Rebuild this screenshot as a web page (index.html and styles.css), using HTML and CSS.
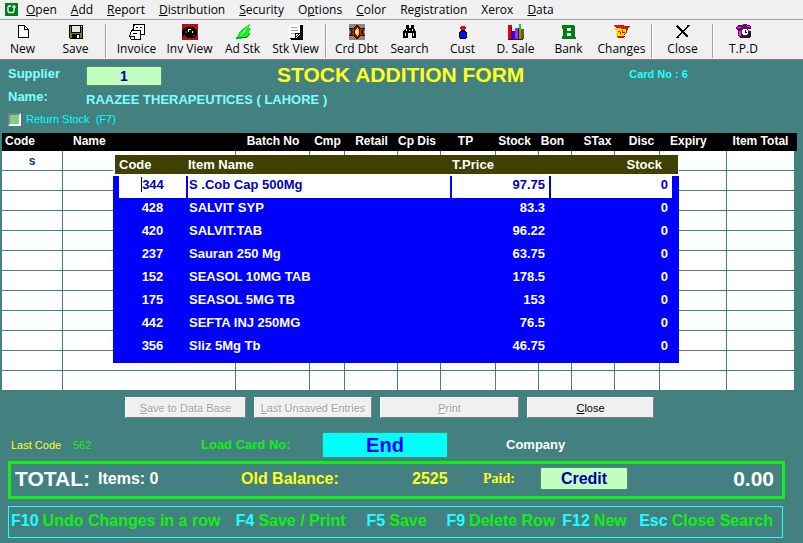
FILE: index.html
```html
<!DOCTYPE html>
<html lang="en">
  <head>
    <meta charset="UTF-8" />
    <title>Stock Addition Form</title>
    <link rel="stylesheet" href="styles.css">
  </head>
  <body>
    <nav class="menu">
      <svg class="app-icon" viewBox="0 0 13 13">
        <rect width="13" height="13" fill="#007d1c" />
        <path d="M6 3H4L3 4v4l1 1.500h4L9 8V6" fill="none" stroke="#fff" stroke-width="1.300" />
        <path d="M7 4h4M9 2v4" stroke="#fff" stroke-width="1.200" />
      </svg>
      <a href="#"><u>O</u>pen</a>
      <a href="#"><u>A</u>dd</a>
      <a href="#"><u>R</u>eport</a>
      <a href="#"><u>D</u>istribution</a>
      <a href="#"><u>S</u>ecurity</a>
      <a href="#">O<u>p</u>tions</a>
      <a href="#"><u>C</u>olor</a>
      <a href="#">Re<u>g</u>istration</a>
      <a href="#">Xerox</a>
      <a href="#"><u>D</u>ata</a>
    </nav>

    <div class="toolbar">
      <button type="button">
        <svg viewBox="0 0 16 16"><path d="M3.500 1.500h6l4 4v8h-10z" fill="#fff" stroke="#000" /><path d="M9.500 1.500v4h4" fill="none" stroke="#000" /></svg>
        New
      </button>
      <button type="button">
        <svg viewBox="0 0 16 16"><path d="M1 1h14v14H2l-1-1z" fill="#000" /><path d="M2 2h1v7h10V4h1v10h-2v-4H4v4H2z" fill="#808000" /><path d="M4 2h8v6H4z" fill="#e8e8e8" /><path d="M13 2h1v1h-1zM9 11h2v3H9z" fill="#fff" /></svg>
        Save
      </button>
      <span class="sep"></span>
      <button type="button">
        <svg viewBox="0 0 16 16"><path d="M4.500.5h11v10h-11z" fill="#fff" stroke="#000" /><path d="M2.500 6.500h9v9h-9l-2-3z" fill="#fff" stroke="#000" /><path d="M5.500.5l-2 6M7 3.500h2M11 3.500h2M4 9.500h4M1 12.500h4v3" fill="none" stroke="#000" /></svg>
        Invoice
      </button>
      <button type="button">
        <svg viewBox="0 0 16 16"><path d="M0 0h16v16H0z" fill="#b01010" /><path d="M0 6l4-3h7l4 3v6l-3 2H5l-2-3-3 2z" fill="#000" /><path d="M6 5h3v1H7v2H6zM10 7h1v2h-1z" fill="#fff" /><path d="M3 7h2v2H3zM11 11h2v1h-2z" fill="#b01010" /></svg>
        Inv View
      </button>
      <button type="button">
        <svg viewBox="0 0 16 16"><path d="M15 0L6 6l-5 8 1 1 9-1 4-4-1-2 2-3-2-1z" fill="#10f020" /><path d="M1 15l4-2 6 1 4-4" fill="none" stroke="#008018" /><path d="M5 12l8-9" stroke="#a0ffa0" /></svg>
        Ad Stk
      </button>
      <button type="button">
        <svg viewBox="0 0 16 16"><path d="M4 1h11v15H3l-1-2z" fill="#000" /><path d="M2 0h10v10l-4 4H1z" fill="#fff" /><path d="M3 3.500h6M3 6.500h7M3 9.500h4" stroke="#a0a0a0" /><path d="M7.500 13.500v-4h4z" fill="#fff" stroke="#000" /></svg>
        Stk View
      </button>
      <span class="sep"></span>
      <button type="button">
        <svg viewBox="0 0 16 16"><path d="M0 0h16v16H0z" fill="#888" /><path d="M8 0l3 4h5l-2 4 2 4h-5l-3 4-3-4H0l2-4-2-4h5z" fill="#400800" /><path d="M8 2l2 3h4l-2 3 2 3h-4l-2 3-2-3H2l2-3-2-3h4z" fill="#b03010" /><path d="M7 4h2v1h2v6H9v1H7v-1H5V5h2z" fill="#401000" /><path d="M8 4l2 2v4l-2 2-2-2V6z" fill="#ffc010" /><path d="M7 6h2v4H7z" fill="#fff040" /></svg>
        Crd Dbt
      </button>
      <button type="button">
        <svg viewBox="0 0 16 16"><path d="M4 1h3v3h2V1h3v3l2 4v6h-4V9H6v5H1V8l3-4z" fill="#000" /><path d="M4 5h1v2H4zM3 9h1v3H3zM10 5h1v2h-1zM11 9h1v3h-1zM7 6h1v1H7z" fill="#fff" /></svg>
        Search
      </button>
      <button type="button">
        <svg viewBox="0 0 16 16"><circle cx="8" cy="11" r="4" fill="#0010f0" stroke="#000" /><path d="M6 2h4v1h1v2h-1v2H6V5H5V3h1z" fill="#d01010" /><path d="M6 6.500h4" stroke="#000" /></svg>
        Cust
      </button>
      <button type="button">
        <svg viewBox="0 0 16 16"><path d="M0 1h4v14H0z" fill="#e00010" /><path d="M4 7h3v8H4z" fill="#1010e0" /><path d="M7 4h3v11H7z" fill="#e010e0" /><path d="M11 0h2v15h-2z" fill="#10d030" /><path d="M13 5h3v10h-3z" fill="#805010" /><path d="M3.500 3v12M10.500 4v11M0 15.500h15" stroke="#401040" /></svg>
        D. Sale
      </button>
      <button type="button">
        <svg viewBox="0 0 16 16"><path fill-rule="evenodd" d="M1 1h11l2 2v4l-1 1 1 1v4h1v2H1v-3h1V5H1zM6 4v3h4V4zM6 9v3h4V9z" fill="#008010" /></svg>
        Bank
      </button>
      <button type="button">
        <svg viewBox="0 0 16 16"><path d="M1 4h10l4-1-3 3 1 2-2 2-1 3H4l-2-2 1-3-2-2z" fill="#ffd800" /><path d="M0 1h8l3 1h5v1l-5 2-9-1zM3 12h8l-2 2H4z" fill="#e01010" /><path d="M11 5l3-1-2 3 1 1-3 3M4 7l2 1v2M8 6l1 3 2-1" fill="none" stroke="#a02000" /></svg>
        Changes
      </button>
      <span class="sep"></span>
      <button type="button">
        <svg viewBox="0 0 16 16"><path d="M2 2l11 11M14 1L2 14" stroke="#000" stroke-width="1.600" /></svg>
        Close
      </button>
      <span class="sep"></span>
      <button type="button">
        <svg viewBox="0 0 16 16"><path d="M2 1h4l2-1 5 1 2 2v2h-3v9H4L2 12V6L0 5V3z" fill="#700070" /><path d="M1 3h4v1H1zM11 2h3v1h-3zM3 7h2v5H3z" fill="#f030f0" /><path d="M12 7h3v6l-2 1H4l-1-1" fill="#301030" /><circle cx="9" cy="8" r="3.500" fill="#fff" stroke="#403040" /><path d="M9 6v2h2" fill="none" stroke="#000" /></svg>
        T.P.D
      </button>
    </div>

    <form>
      <header class="supplier">
        <label for="supplier">Supplier</label>
        <input type="text" id="supplier" class="field" value="1" />
        <h1>STOCK ADDITION FORM</h1>
        <span class="card-no">Card No : 6</span>
        <span>Name:</span>
        <span class="supplier-name">RAAZEE THERAPEUTICES ( LAHORE )</span>
        <label class="return" for="return_stock">
          <input type="checkbox" id="return_stock" />
          Return Stock&nbsp; (F7)
        </label>
      </header>

      <div class="sheet">
        <table class="grid">
          <colgroup>
            <col class="w-code" />
            <col />
            <col class="w-batch" />
            <col class="w-cmp" />
            <col class="w-retail" />
            <col class="w-cpdis" />
            <col class="w-tp" />
            <col class="w-stock" />
            <col class="w-bon" />
            <col class="w-stax" />
            <col class="w-disc" />
            <col class="w-expiry" />
            <col class="w-total" />
          </colgroup>
          <thead>
            <tr>
              <th class="left">Code</th>
              <th class="left indent">Name</th>
              <th>Batch No</th>
              <th>Cmp</th>
              <th>Retail</th>
              <th class="back">Cp Dis</th>
              <th class="back">TP</th>
              <th class="back">Stock</th>
              <th class="back">Bon</th>
              <th class="ahead">STax</th>
              <th class="ahead">Disc</th>
              <th class="left indent">Expiry</th>
              <th>Item Total</th>
            </tr>
          </thead>
          <tbody>
            <tr><td>s</td><td></td><td></td><td></td><td></td><td></td><td></td><td></td><td></td><td></td><td></td><td></td><td></td></tr>
            <tr><td></td><td></td><td></td><td></td><td></td><td></td><td></td><td></td><td></td><td></td><td></td><td></td><td></td></tr>
            <tr><td></td><td></td><td></td><td></td><td></td><td></td><td></td><td></td><td></td><td></td><td></td><td></td><td></td></tr>
            <tr><td></td><td></td><td></td><td></td><td></td><td></td><td></td><td></td><td></td><td></td><td></td><td></td><td></td></tr>
            <tr><td></td><td></td><td></td><td></td><td></td><td></td><td></td><td></td><td></td><td></td><td></td><td></td><td></td></tr>
            <tr><td></td><td></td><td></td><td></td><td></td><td></td><td></td><td></td><td></td><td></td><td></td><td></td><td></td></tr>
            <tr><td></td><td></td><td></td><td></td><td></td><td></td><td></td><td></td><td></td><td></td><td></td><td></td><td></td></tr>
            <tr><td></td><td></td><td></td><td></td><td></td><td></td><td></td><td></td><td></td><td></td><td></td><td></td><td></td></tr>
            <tr><td></td><td></td><td></td><td></td><td></td><td></td><td></td><td></td><td></td><td></td><td></td><td></td><td></td></tr>
            <tr><td></td><td></td><td></td><td></td><td></td><td></td><td></td><td></td><td></td><td></td><td></td><td></td><td></td></tr>
            <tr><td></td><td></td><td></td><td></td><td></td><td></td><td></td><td></td><td></td><td></td><td></td><td></td><td></td></tr>
            <tr><td></td><td></td><td></td><td></td><td></td><td></td><td></td><td></td><td></td><td></td><td></td><td></td><td></td></tr>
          </tbody>
        </table>

        <!-- item search list, opens over the grid -->
        <table class="lookup">
          <colgroup>
            <col class="l-code" />
            <col />
            <col class="l-price" />
            <col class="l-stock" />
          </colgroup>
          <thead>
            <tr><th>Code</th><th>Item Name</th><th>T.Price</th><th>Stock</th></tr>
          </thead>
          <tbody>
            <tr class="current"><td><span class="caret">344</span></td><td>S .Cob Cap 500Mg</td><td>97.75</td><td>0</td></tr>
            <tr><td>428</td><td>SALVIT SYP</td><td>83.3</td><td>0</td></tr>
            <tr><td>420</td><td>SALVIT.TAB</td><td>96.22</td><td>0</td></tr>
            <tr><td>237</td><td>Sauran 250 Mg</td><td>63.75</td><td>0</td></tr>
            <tr><td>152</td><td>SEASOL 10MG TAB</td><td>178.5</td><td>0</td></tr>
            <tr><td>175</td><td>SEASOL 5MG TB</td><td>153</td><td>0</td></tr>
            <tr><td>442</td><td>SEFTA INJ 250MG</td><td>76.5</td><td>0</td></tr>
            <tr><td>356</td><td>Sliz 5Mg Tb</td><td>46.75</td><td>0</td></tr>
          </tbody>
        </table>
      </div>

      <div class="actions">
        <button type="button" disabled><u>S</u>ave to Data Base</button>
        <button type="button" disabled><u>L</u>ast Unsaved Entries</button>
        <button type="button" disabled><u>P</u>rint</button>
        <button type="button"><u>C</u>lose</button>
      </div>

      <div class="status">
        <span class="small yellow">Last Code</span>
        <span class="small green">562</span>
        <label class="green" for="card">Load Card No:</label>
        <input type="text" id="card" class="field card" value="End" />
        <span class="company">Company</span>
      </div>

      <div class="total">
        <strong>TOTAL:</strong>
        <span>Items: 0</span>
        <span class="yellow">Old Balance:</span>
        <span class="yellow">2525</span>
        <label class="yellow paid" for="paid">Paid:</label>
        <input type="text" id="paid" class="field paid-type" value="Credit" />
        <strong class="amount">0.00</strong>
      </div>
    </form>

    <footer class="keys">
      <span><kbd>F10</kbd>Undo Changes in a row</span>
      <span><kbd>F4</kbd>Save / Print</span>
      <span><kbd>F5</kbd>Save</span>
      <span><kbd>F9</kbd>Delete Row</span>
      <span><kbd>F12</kbd>New</span>
      <span><kbd>Esc</kbd>Close Search</span>
    </footer>
  </body>
</html>
```
FILE: styles.css
```css
* {
  box-sizing: border-box;
}

body {
  margin: 0;
  background: #438080;
  color: #80ffff;
  font: bold 13px/16px "Liberation Sans", Arial, sans-serif;
  white-space: nowrap;
}

/* menu and toolbar */
.menu {
  display: flex;
  align-items: center;
  gap: 14px;
  height: 19px;
  padding-left: 5px;
  background: #f0f0f0;
  font: 12px/18px "Open Sans", sans-serif;
}

.menu a {
  color: #000;
  text-decoration: none;
}

.app-icon {
  width: 13px;
  height: 13px;
  margin-right: -6px;
}

.toolbar {
  display: flex;
  height: 41px;
  padding-top: 4px;
  border-top: 1px solid #a0a0a0;
  border-bottom: 1px solid #808080;
  background: #f0f0f0;
}

.toolbar button {
  display: flex;
  flex-direction: column;
  align-items: center;
  flex: none;
  width: 53px;
  padding: 0;
  border: 0;
  background: none;
  color: #000;
  font: 12px/18px "Open Sans", sans-serif;
  white-space: nowrap;
}

.toolbar button:first-child {
  margin-left: -4px;
}

.toolbar svg {
  flex: none;
  width: 16px;
  height: 16px;
  shape-rendering: crispEdges;
}

.sep {
  width: 2px;
  height: 34px;
  margin: 0 3px;
  border-left: 1px solid #a0a0a0;
  border-right: 1px solid #fff;
}

/* supplier block */
.supplier {
  display: grid;
  grid-template-columns: 78px 191px 17fr 8fr;
  grid-template-rows: 22px 20px 18px;
  row-gap: 1px;
  padding: 6px 8px 5px;
}

h1 {
  margin: 0;
  color: #ffff20;
  font-size: 21px;
  line-height: 18px;
}

.field {
  width: 76px;
  height: 20px;
  padding: 0;
  border: 1px solid #5b8a6b;
  border-radius: 2px;
  background: #c0ffc0;
  color: #0000a8;
  font: bold 14px/16px "Liberation Sans", Arial, sans-serif;
  text-align: center;
}

.card-no {
  color: #20ffff;
  font-size: 11px;
}

.supplier-name {
  grid-column: 2 / -1;
  padding-top: 3px;
}

.return {
  display: flex;
  grid-column: 1 / -1;
  align-items: center;
  gap: 5px;
  color: #00ffff;
  font-size: 11px;
  font-weight: normal;
}

.return input {
  appearance: none;
  width: 13px;
  height: 13px;
  margin: 0;
  border: 2px solid;
  border-color: #808080 #fff #fff #808080;
  background: #80d080;
}

/* invoice grid */
.sheet {
  position: relative;
  margin: 0 9px 0 2px;
}

table {
  border-collapse: separate;
  border-spacing: 0;
  table-layout: fixed;
}

.grid {
  width: 100%;
}

.grid th {
  height: 18px;
  padding: 0;
  background: #000;
  color: #fff;
  font-size: 12px;
  line-height: 16px;
  vertical-align: top;
}

.grid .left {
  padding-left: 3px;
  text-align: left;
}

.grid .indent {
  padding-left: 10px;
}

.grid .back {
  padding-right: 6px;
}

.grid .ahead {
  padding-left: 8px;
}

.grid th:last-child {
  box-shadow: 3px 0 #000;
}

.grid td {
  height: 20px;
  padding: 0;
  border-right: 1px solid #438080;
  border-bottom: 1px solid #438080;
  background: #fff;
  color: #004080;
  font-size: 12px;
  text-align: center;
}

.grid td:last-child {
  border-right: 0;
}

.grid tbody tr:last-child td {
  height: 19px;
  border-bottom: 0;
}

.w-code { width: 61px; }
.w-batch { width: 74px; }
.w-cmp { width: 35px; }
.w-retail { width: 53px; }
.w-cpdis { width: 43px; }
.w-tp { width: 55px; }
.w-stock { width: 43px; }
.w-bon { width: 33px; }
.w-stax { width: 43px; }
.w-disc { width: 45px; }
.w-expiry { width: 67px; }
.w-total { width: 67px; }

/* item search list */
.lookup {
  position: absolute;
  top: 22px;
  left: 111px;
  width: calc(100% - 226px);
  background: #0000ff;
  color: #fff;
}

.lookup th {
  height: 21px;
  padding: 0;
  border-bottom: 2px solid #fff;
  background: #404000;
  text-align: left;
}

.lookup th:first-child {
  padding-left: 4px;
  border-left: 2px solid #fff;
}

.lookup th:nth-child(n + 2) {
  padding-left: 2px;
}

.lookup th:last-child {
  padding-right: 16px;
  border-right: 1px solid #fff;
  text-align: right;
}

.lookup td {
  height: 23px;
  padding: 1px 4px 0 1px;
  border-left: 2px solid #0000ff;
  border-bottom: 1px solid #0000ff;
  vertical-align: top;
}

.lookup tr:last-child td {
  height: 26px;
}

.lookup td:first-child {
  padding-right: 1px;
  border-left-width: 6px;
  text-align: center;
}

.lookup td:nth-child(n + 3) {
  text-align: right;
}

.lookup td:last-child {
  border-right: 7px solid #0000ff;
}

.lookup .current td {
  background: #fff;
  color: #0000c0;
}

.caret {
  border-left: 1px solid #000;
}

.l-code { width: 73px; }
.l-price { width: 99px; }
.l-stock { width: 130px; }

/* buttons under the grid */
.actions {
  display: grid;
  grid-template-columns: 121px 118px 139px 127px;
  gap: 8px;
  padding: 7px 0 0 125px;
}

.actions button {
  height: 21px;
  padding: 0;
  border: 1px solid;
  border-color: #fff #808080 #808080 #fff;
  background: #f0f0f0;
  color: #000;
  font: 11px/16px "Liberation Sans", Arial, sans-serif;
}

.actions button:disabled {
  color: #a0a0a0;
  text-shadow: 1px 1px #fff;
}

.status {
  display: grid;
  grid-template-columns: 62px 128px 121px 184px auto;
  align-items: center;
  justify-content: start;
  padding: 14px 0 3px 11px;
}

.small {
  font-size: 11px;
  font-weight: normal;
}

.yellow {
  color: #ffff20;
}

.green {
  color: #12f012;
}

.company {
  color: #fff;
}

.field.card {
  width: 126px;
  height: 26px;
  background: #00ffff;
  color: #0000ff;
  font-size: 20px;
}

/* totals */
.total {
  display: grid;
  grid-template-columns: 83px 143px 171px 71px 57px 88px 1fr;
  align-items: center;
  height: 38px;
  margin: 0 18px 0 8px;
  padding: 0 8px 3px 4px;
  border: 3px solid #12f012;
  color: #fff;
  font-size: 16px;
  line-height: 20px;
}

.total strong {
  font-size: 21px;
}

.total .amount {
  text-align: right;
}

.total .paid {
  font-family: "Liberation Serif", "Times New Roman", serif;
  font-size: 14px;
}

.field.paid-type {
  width: 88px;
  height: 23px;
  font-size: 16px;
}

/* shortcut keys */
.keys {
  display: grid;
  grid-template-columns: 225fr 131fr 80fr 116fr 77fr 143fr;
  margin: 7px 20px 6px 8px;
  padding: 4px 0 7px 2px;
  border: 1px solid #20ffff;
  color: #12f012;
  font-size: 16px;
  line-height: 19px;
}

.keys kbd {
  margin-right: 4px;
  color: #20ffff;
  font: inherit;
}
```
